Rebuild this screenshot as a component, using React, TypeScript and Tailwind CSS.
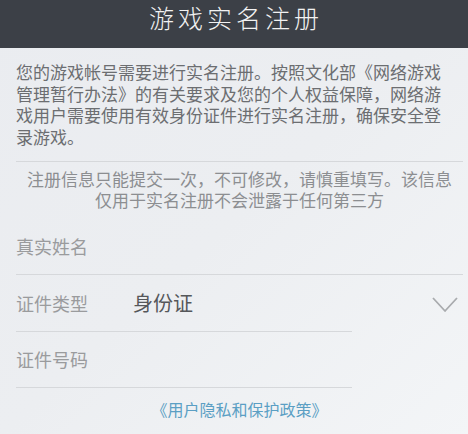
const cjk = { fontFamily: '"Noto Sans CJK SC", "Noto Sans", sans-serif' };

function FieldRow(props: { label: string; full?: boolean; value?: string; tall?: boolean }) {
  return (
    <div className="flex items-center">
      <div
        className={
          "flex items-center border-b border-[#d6d8db] " +
          (props.tall ? "h-[57px] " : "h-[56px] ") +
          (props.full ? "flex-1" : "w-[336px]")
        }
      >
        <span className="w-[117px] text-[18px] text-[#9a9b9d]">{props.label}</span>
        {props.value ? (
          <span className="text-[20px] text-[#55575a]">{props.value}</span>
        ) : null}
      </div>
    </div>
  );
}

export default function App() {
  return (
    <div
      className="flex h-[434px] w-[468px] flex-col overflow-hidden bg-gradient-to-br from-[#eaecf0] via-[#eceef1] to-[#f3f5f7]"
      style={cjk}
    >
      <div className="flex h-[48px] shrink-0 justify-center bg-[#3c4047] pt-[1px]">
        <h1 className="pl-[4px] text-[25px] font-light leading-[32px] tracking-[4px] text-[#f2f2f2]">
          游戏实名注册
        </h1>
      </div>

      <div className="flex flex-col pl-4 pr-[5px]">
        <p className="mt-[13px] text-[17px] leading-[21.5px] text-[#6c6e71]">
          您的游戏帐号需要进行实名注册。按照文化部《网络游戏
          <br />
          管理暂行办法》的有关要求及您的个人权益保障，网络游
          <br />
          戏用户需要使用有效身份证件进行实名注册，确保安全登
          <br />
          录游戏。
        </p>
        <div className="mt-[14px] border-b border-[#d6d8db]" />

        <p className="mt-[7px] text-center text-[17px] leading-[20.5px] text-[#8c8e91]">
          注册信息只能提交一次，不可修改，请慎重填写。该信息
          <br />
          仅用于实名注册不会泄露于任何第三方
        </p>

        <div className="mt-[9px] flex flex-col">
          <FieldRow label="真实姓名" full />
          <div className="flex items-center">
            <FieldRow label="证件类型" value="身份证" tall />
            <div className="ml-auto mr-[5px] flex h-[57px] items-center pt-[3px]">
              <svg width="26" height="16" viewBox="0 0 26 16" fill="none">
                <polyline
                  points="1,1 13,14 25,1"
                  stroke="#a9abae"
                  strokeWidth="1.8"
                  strokeLinejoin="round"
                />
              </svg>
            </div>
          </div>
          <FieldRow label="证件号码" />
        </div>

        <div className="mt-[11px] text-center text-[16px] leading-[20px] text-[#5b9fc4]">
          《用户隐私和保护政策》
        </div>
      </div>
    </div>
  );
}
